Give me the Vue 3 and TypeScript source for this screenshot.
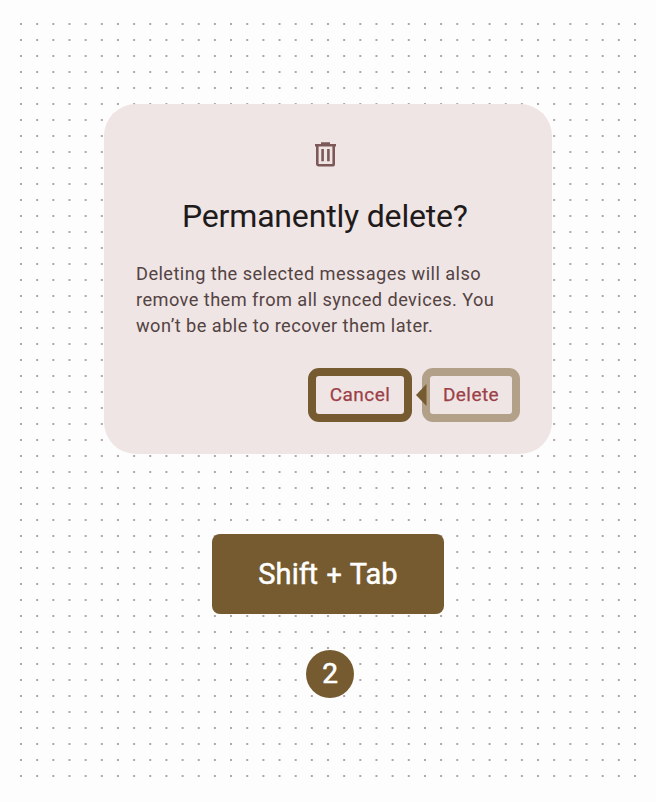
<script setup lang="ts">
const columns: number[] = Array.from({ length: 39 }, (_, i) => 21 + (i * 614) / 38)
const bodyLines: string[] = [
  'Deleting the selected messages will also',
  'remove them from all synced devices. You',
  'won’t be able to recover them later.',
]
</script>

<template>
  <main class="stage">
    <svg class="dots" width="656" height="802" viewBox="0 0 656 802" aria-hidden="true">
      <line v-for="x in columns" :key="x" :x1="x" :x2="x" y1="23" y2="777" />
    </svg>

    <section class="dialog" role="dialog" aria-labelledby="title">
      <svg class="trash" width="24" height="26" viewBox="0 0 24 26" aria-hidden="true">
        <path class="outline" d="M3.3 3.3V22a1.3 1.3 0 0 0 1.3 1.3h13.8a1.3 1.3 0 0 0 1.3-1.3V3.3" />
        <path class="solid" d="M1 2h6V0.2h9V2h6v2.5H1zM7.3 7h2.6v12.2H7.3zM13.1 7h2.6v12.2h-2.6z" />
      </svg>
      <h1 id="title"><span>Permanently delete?</span></h1>
      <p class="body">
        <span v-for="line in bodyLines" :key="line">{{ line }}</span>
      </p>
      <div class="actions">
        <button class="action cancel" type="button"><span>Cancel</span></button>
        <button class="action delete" type="button">
          <span>Delete</span>
          <svg class="arrow" width="11" height="22" viewBox="0 0 11 22" aria-hidden="true">
            <path d="M0 11L10.5 0v22z" />
          </svg>
        </button>
      </div>
    </section>

    <div class="key"><span>Shi<span class="tight">f</span>t <span class="plus">+</span> Tab</span></div>
    <div class="step"><span>2</span></div>
  </main>
</template>

<style>
body {
  background: #fdfdfd;
}
</style>

<style scoped>
.stage {
  position: relative;
  box-sizing: border-box;
  width: 656px;
  height: 802px;
  padding-top: 104px;
  display: flex;
  flex-direction: column;
  align-items: center;
  overflow: hidden;
  background: #fdfdfd;
  font-family: Roboto, sans-serif;
}

.dots {
  position: absolute;
  inset: 0;
}

.dots line {
  stroke: #b0a7a7;
  stroke-width: 2;
  stroke-dasharray: 2 14;
}

.dialog {
  position: relative;
  box-sizing: border-box;
  width: 448px;
  height: 350px;
  padding: 38px 32px 32px;
  border-radius: 32px;
  background: #efe5e4;
  display: flex;
  flex-direction: column;
}

.trash {
  display: block;
  margin-left: 178px;
}

.trash .outline {
  fill: none;
  stroke: #7d5858;
  stroke-width: 2.6;
}

.trash .solid {
  fill: #7d5858;
}

h1 {
  margin: 28px 0 0 46px;
  font-size: 32px;
  line-height: 40px;
  font-weight: 400;
  letter-spacing: -0.18px;
  color: #211a1a;
  white-space: nowrap;
}

.body {
  margin: 25px 0 0;
  display: flex;
  flex-direction: column;
  align-items: flex-start;
  font-size: 18.2px;
  line-height: 26px;
  letter-spacing: 0.44px;
  color: #534343;
  white-space: nowrap;
}

.actions {
  margin-top: 29px;
  display: flex;
  justify-content: flex-end;
  gap: 10px;
}

.action {
  position: relative;
  box-sizing: border-box;
  height: 54px;
  padding: 0;
  border: 8px solid #755b2f;
  border-radius: 11px;
  background: transparent;
  color: #9c4048;
  font: 400 19px/38px Roboto, sans-serif;
  letter-spacing: 0.42px;
  -webkit-text-stroke: 0.25px #9c4048;
  white-space: nowrap;
}

.cancel {
  width: 104px;
}

.delete {
  width: 98px;
  border-color: #b2a089;
}

.arrow {
  position: absolute;
  left: -14px;
  top: 8px;
  fill: #755b2f;
}

.key {
  position: relative;
  width: 232px;
  height: 80px;
  margin-top: 80px;
  border-radius: 8px;
  background: #755b2f;
  color: #fff;
  font-size: 29px;
  line-height: 80px;
  font-weight: 400;
  letter-spacing: 0.1px;
  -webkit-text-stroke: 0.5px #fff;
  text-align: center;
  white-space: nowrap;
}

.tight {
  letter-spacing: -0.3px;
}

.plus {
  margin: 0 1px;
  font-size: 27px;
}

.step {
  position: relative;
  width: 48px;
  height: 48px;
  margin: 36px 0 0 4px;
  border-radius: 50%;
  background: #755b2f;
  color: #fff;
  font-size: 28px;
  line-height: 48px;
  font-weight: 400;
  -webkit-text-stroke: 0.6px #fff;
  text-align: center;
}
</style>
